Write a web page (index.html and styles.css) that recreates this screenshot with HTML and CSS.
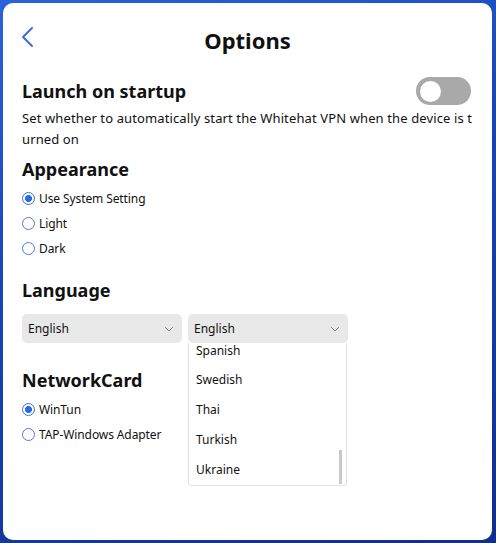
FILE: index.html
```html
<!DOCTYPE html>
<html>
<head>
<meta charset="utf-8">
<link rel="stylesheet" href="styles.css">
</head>
<body>
<div class="window">
  <header class="header">
    <svg class="back" width="14" height="22" viewBox="0 0 14 22"><path d="M11 2 L2 11 L11 20" fill="none" stroke="#3a6fd6" stroke-width="2" stroke-linecap="round" stroke-linejoin="round"/></svg>
    <h1 class="title">Options</h1>
    <span></span>
  </header>

  <section class="startup">
    <div class="row">
      <h2 class="heading">Launch on startup</h2>
      <span class="toggle"><span class="knob"></span></span>
    </div>
    <p class="desc">Set whether to automatically start the Whitehat VPN when the device is turned on</p>
  </section>

  <section class="group">
    <h2 class="heading">Appearance</h2>
    <ul class="radios">
      <li class="radio checked"><span class="dot"></span>Use System Setting</li>
      <li class="radio"><span class="dot"></span>Light</li>
      <li class="radio"><span class="dot"></span>Dark</li>
    </ul>
  </section>

  <section class="group lang">
    <h2 class="heading">Language</h2>
    <div class="selects">
      <div class="select"><span>English</span><svg width="10" height="6" viewBox="0 0 10 6"><path d="M1 1 L5 5 L9 1" fill="none" stroke="#8a8a8a" stroke-width="1"/></svg></div>
      <div class="select open"><span>English</span><svg width="10" height="6" viewBox="0 0 10 6"><path d="M1 1 L5 5 L9 1" fill="none" stroke="#8a8a8a" stroke-width="1"/></svg>
        <ul class="menu">
          <li class="first">Spanish</li>
          <li>Swedish</li>
          <li>Thai</li>
          <li>Turkish</li>
          <li>Ukraine</li>
          <span class="scroll"></span>
        </ul>
      </div>
    </div>
  </section>

  <section class="group net">
    <h2 class="heading">NetworkCard</h2>
    <ul class="radios">
      <li class="radio checked"><span class="dot"></span>WinTun</li>
      <li class="radio"><span class="dot"></span>TAP-Windows Adapter</li>
    </ul>
  </section>
</div>
</body>
</html>
```
FILE: styles.css
```css
html, body { margin: 0; padding: 0; }
body {
  width: 496px; height: 543px; overflow: hidden;
  background: linear-gradient(160deg, #2a64d8 0%, #1845b8 40%, #0f2f8f 100%);
  font-family: "Noto Sans", "Open Sans", sans-serif;
  color: #111;
}
.window {
  box-sizing: border-box;
  margin: 3px 4px 0 3px;
  height: 537px;
  background: #fff;
  border-radius: 10px;
  padding: 0 19px;
}
.header {
  display: grid;
  grid-template-columns: 1fr auto 1fr;
  align-items: center;
  padding-top: 20px;
  height: 35px;
}
.back { margin-left: -1px; align-self: start; margin-top: 3px; }
.title { margin: 0; font-size: 22px; font-weight: 700; line-height: 35px; }
.heading { margin: 0; font-size: 18px; font-weight: 700; line-height: 26px; }
.startup { margin-top: 19px; }
.row { display: flex; justify-content: space-between; align-items: center; height: 28px; }
.toggle {
  width: 55px; height: 28px; border-radius: 14px; background: #a9a9a9;
  display: flex; align-items: center; padding-left: 4px; box-sizing: border-box; margin-right: 2px;
}
.knob { width: 21px; height: 21px; border-radius: 50%; background: #fff; }
.desc { margin: 3px 0 0; font-size: 13px; line-height: 21px; word-break: break-all; letter-spacing: 0.12px; }
.group { margin-top: 6px; }
.radios { list-style: none; margin: 4px 0 0; padding: 0; }
.radio { display: flex; align-items: center; height: 25px; font-size: 12px; gap: 4px; letter-spacing: -0.1px; }
.dot {
  width: 13px; height: 13px; border-radius: 50%; box-sizing: border-box;
  border: 1px solid #4f78d4; background: #fff; flex: none;
}
.radio.checked .dot { background: radial-gradient(circle, #2f6ae0 0 3.2px, #fff 3.8px); border-color: #3d6fd6; }
.lang { margin-top: 16px; }
.selects { display: flex; gap: 6px; margin-top: 11px; }
.select {
  position: relative;
  width: 160px; height: 29px; box-sizing: border-box;
  background: #e8e8e8; border-radius: 5px;
  display: flex; align-items: center; justify-content: space-between;
  padding: 0 8px 0 6px; font-size: 12px;
}
.menu {
  position: absolute; left: 0; top: 29px;
  width: 159px; height: 143px; box-sizing: border-box;
  margin: 0; padding: 0 0 0 7px; list-style: none;
  background: #fff; border: 1px solid #e2e2e2; border-top: none; border-radius: 0 0 4px 4px;
  overflow: hidden;
}
.menu li { height: 30px; line-height: 30px; font-size: 12px; }
.menu li.first { height: 22px; line-height: 16px; }
.scroll { position: absolute; right: 4px; top: 107px; width: 3px; height: 34px; background: #c9c9c9; }
.net { margin-top: 24px; }
```
